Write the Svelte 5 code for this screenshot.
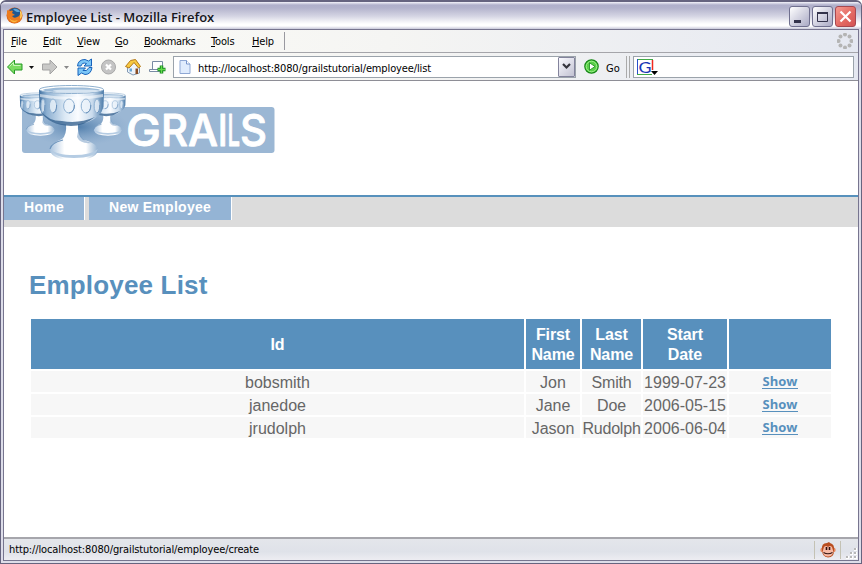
<script>
  const menus = [
    { label: 'File', w: 32 },
    { label: 'Edit', w: 34 },
    { label: 'View', w: 38 },
    { label: 'Go', w: 29 },
    { label: 'Bookmarks', w: 67 },
    { label: 'Tools', w: 41 },
    { label: 'Help', w: 32 }
  ];
  const employees = [
    { id: 'bobsmith', first: 'Jon', last: 'Smith', start: '1999-07-23' },
    { id: 'janedoe', first: 'Jane', last: 'Doe', start: '2006-05-15' },
    { id: 'jrudolph', first: 'Jason', last: 'Rudolph', start: '2006-06-04' }
  ];
  const dots = Array.from({ length: 8 }, (_, i) => ({
    x: 8 + 6.4 * Math.cos((i * Math.PI) / 4),
    y: 8 + 6.4 * Math.sin((i * Math.PI) / 4)
  }));
  const jewels = [
    { x: 24, rx: 2 },
    { x: 34, rx: 3.6 },
    { x: 50, rx: 5.4 },
    { x: 67, rx: 4.8 },
    { x: 78, rx: 2.8 }
  ];
  const wordmark = [
    { c: 'G', x: 126, w: 35 },
    { c: 'R', x: 161, w: 27 },
    { c: 'A', x: 188, w: 30 },
    { c: 'I', x: 218, w: 9.5 },
    { c: 'L', x: 227.5, w: 12.5 },
    { c: 'S', x: 240, w: 27 }
  ];
</script>

{#snippet cup()}
  <path d="M47 40 H59 Q58 53 64 57 Q79 60 79 68 Q76 77 55 77 Q34 77 31 68 Q31 60 43 56 Q48 52 47 40Z" fill="url(#metal)" />
  <path d="M32 66 Q35 75 55 75 Q76 75 79 66 Q72 72 55 72 Q37 72 32 66Z" fill="#b5cce3" />
  <path d="M60 43 Q60 53 65 57 L72 60 Q61 61 58 54Z" fill="#6f98c1" opacity=".5" />
  <path d="M31 66 Q32 60 44 57" fill="none" stroke="#6b93bc" stroke-width="1.2" />
  <path d="M20 7 L20.500 25 Q23 36 37 40 Q53 44 69 39 Q82 34 84.500 24 L85 7 Q52 13 20 7Z" fill="url(#bowl)" />
  <path d="M22 28 Q29 38 43 38 Q60 41 76 34 Q65 43 52 43 Q29 42 22 28Z" fill="#2b5a89" opacity=".75" />
  <path d="M21 11 Q52 17 84 11 L84 14 Q52 20 21 14Z" fill="#fff" opacity=".55" />
  <ellipse cx="52.500" cy="6.500" rx="32" ry="4" fill="#fff" stroke="#8fb0cf" stroke-width="1" />
  <ellipse cx="52.500" cy="7" rx="28.500" ry="2.600" fill="#9dbbd8" />
  <ellipse cx="57" cy="8" rx="23" ry="1.600" fill="#d6e4f1" />
  {#each jewels as j}
    <ellipse cx={j.x} cy="23" rx={j.rx} ry="7" fill="#edf4fb" fill-opacity=".75" stroke="#93b4d4" stroke-width="1" />
    <path d="M{j.x + j.rx} 22 Q{j.x + j.rx} 29 {j.x} 30" fill="none" stroke="#6a92bc" stroke-width="1" />
  {/each}
{/snippet}

<div class="window">
  <header class="titlebar">
    <svg class="fox" width="17" height="17" viewBox="0 0 17 17">
      <circle cx="8.5" cy="8.5" r="8" fill="#d8651c" />
      <circle cx="8.8" cy="7" r="6.2" fill="#20578f" />
      <path d="M7 2 Q12 1 14 5 L11 5 L9 4Z" fill="#5da6d8" />
      <path d="M1 3 Q2 4 4 4 Q6 3 7 4 L6 6 L9 8 L6 9 Q8 12 11 10 Q15 9 14 3 Q17 7 16 11 Q13 17 7 16 Q0 14 1 3Z" fill="#ec7b1d" />
      <path d="M3 11 Q6 15 12 13 Q9 17 5 14Z" fill="#f9b640" />
      <path d="M15 4 Q17 9 14 12 Q15 8 14 5Z" fill="#ffe271" />
    </svg>
    <span class="caption">Employee List - Mozilla Firefox</span>
    <div class="controls">
      <button class="ctl" aria-label="Minimize"><svg width="17" height="17"><path d="M3 13.500h7" stroke="#33334b" stroke-width="3" /></svg></button>
      <button class="ctl" aria-label="Maximize"><svg width="17" height="17"><path d="M3.500 4.500h10v9h-10z" fill="none" stroke="#33334b" /><path d="M3 5h11" stroke="#33334b" stroke-width="2" /></svg></button>
      <button class="ctl close" aria-label="Close"><svg width="17" height="17"><path d="M3.500 3.500l10 10M13.500 3.500l-10 10" stroke="#fff" stroke-width="2.200" /></svg></button>
    </div>
  </header>

  <div class="frame">
    <nav class="menubar">
      {#each menus as m}
        <span class="menu" class:tight={m.label === 'Bookmarks'} style="width:{m.w}px"><u>{m.label[0]}</u>{m.label.slice(1)}</span>
      {/each}
      <span class="menusep"></span>
      <svg class="throbber" width="16" height="16">
        {#each dots as d}<circle cx={d.x} cy={d.y} r="2" fill="#b4b4b4" />{/each}
      </svg>
    </nav>

    <div class="toolbar">
      <svg class="icons" width="164" height="20" viewBox="4 57 164 20">
        <path d="M7.500 67 L14.500 60 V64 H22 V70 H14.500 V74Z" fill="#7bdc60" stroke="#279b26" stroke-linejoin="round" />
        <path d="M9.500 66.500 L13.500 62.500 V65.500 H20.500" fill="none" stroke="#c9f6b9" />
        <path d="M29 66h5l-2.500 3z" fill="#111" />
        <path d="M57 67 L50 60 V64 H42.500 V70 H50 V74Z" fill="#c9c9c7" stroke="#a3a3a3" stroke-linejoin="round" />
        <path d="M64 66h5l-2.500 3z" fill="#888" />
        <path d="M77.500 66 Q78 59.500 85 59.500 L88.500 61 L91.500 59 V66 H84 L86.500 63.500 Q82 62 81 66Z" fill="#7cc6f6" stroke="#1763bc" />
        <path d="M92 67.500 Q91 74.500 85 74.500 L81.500 73 L78 75.500 V68 H85.500 L83 70.500 Q87 72 89 67.500Z" fill="#7cc6f6" stroke="#1763bc" />
        <circle cx="108.500" cy="67" r="7" fill="#c4c4c4" stroke="#a9a9a9" />
        <path d="M106 64.500l5 5M111 64.500l-5 5" stroke="#fff" stroke-width="2.200" />
        <path d="M127.500 66 L133 61 L139.500 67 V73 L133 75 L127.500 72Z" fill="#edf3fa" stroke="#8299b4" />
        <path d="M135.500 68.500h2.500v5.500h-2.500z" fill="#8a4c22" />
        <path d="M129.500 68.500h2.500v3h-2.500z" fill="#67a6d4" />
        <path d="M125.500 66.500 L130.500 60.500 L135.500 59.500 L140.500 66.500 L138.500 68 L134 62.500 L129 68Z" fill="#f8c940" stroke="#b4791a" stroke-linejoin="round" />
        <path d="M152.500 69V61.500h10V69M149.500 69.500h11v2h-11z" fill="#fff" stroke="#798ba4" />
        <path d="M161.500 65.500v8M157.500 69.500h8" stroke="#198d20" stroke-width="3.500" />
        <path d="M161.500 66v7M158 69.500h7" stroke="#65da4b" stroke-width="1.300" />
      </svg>
      <div class="address">
        <svg width="12" height="14"><path d="M1 .5h6.500l3.500 3.500v9.500h-10z" fill="#e0ecfd" stroke="#8fa8d4" /><path d="M7.500 .5v3.500h3.500" fill="#fff" stroke="#7795cc" /></svg>
        <span class="url">http://localhost:8080/grailstutorial/employee/list</span>
        <span class="drop"><svg width="9" height="7"><path d="M1 1l3.500 3.500L8 1" fill="none" stroke="#34343d" stroke-width="2.200" /></svg></span>
      </div>
      <svg class="gobtn" width="15" height="15"><circle cx="7.500" cy="7.500" r="6.700" fill="#5bd04a" stroke="#178818" stroke-width="1.200" /><circle cx="7.500" cy="7.500" r="5.300" fill="none" stroke="#9cf088" /><path d="M5.500 3.800l5.500 3.700-5.500 3.700z" fill="#fff" stroke="#178818" stroke-width=".8" /></svg>
      <span class="go">Go</span>
      <span class="grip"></span>
      <div class="search">
        <svg class="engine" width="22" height="18">
          <path d="M0 .5h16" stroke="#42a947" /><path d="M.5 0v16" stroke="#294fcb" /><path d="M15.500 1v10" stroke="#ef2921" stroke-width="1.500" /><path d="M0 15.500h15" stroke="#42a947" />
          <text x="1.500" y="13.500" textLength="13" lengthAdjust="spacingAndGlyphs" font-family="Lato, sans-serif" font-size="16" fill="#1737b5">G</text>
          <path d="M14 12h7l-3.500 4z" fill="#000" />
        </svg>
      </div>
    </div>

    <main class="page">
      <div class="brand">
        <svg width="262" height="84" viewBox="16 81 262 84">
          <defs>
            <linearGradient id="metal" x1="0" x2="1">
              <stop offset="0" stop-color="#a9c3de" /><stop offset=".3" stop-color="#fff" /><stop offset=".75" stop-color="#fff" /><stop offset="1" stop-color="#90b0d0" />
            </linearGradient>
            <linearGradient id="bowl" x1="0" x2="1">
              <stop offset="0" stop-color="#3f6f9f" /><stop offset=".12" stop-color="#8cafd1" /><stop offset=".4" stop-color="#dce9f5" /><stop offset=".6" stop-color="#fafcff" /><stop offset=".82" stop-color="#c9dbed" /><stop offset="1" stop-color="#4b7aa8" />
            </linearGradient>
            <radialGradient id="shade"><stop offset="0" stop-color="#3d6fa1" stop-opacity=".8" /><stop offset="1" stop-color="#7fa3c8" stop-opacity="0" /></radialGradient>
          </defs>
          <rect x="22" y="107" width="252.500" height="46" rx="3" fill="#9bb7d4" />
          <ellipse cx="78" cy="127" rx="52" ry="19" fill="url(#shade)" />
          <g transform="translate(8 91.500) scale(.59 .575)">{@render cup()}</g>
          <g transform="translate(75.500 91.500) scale(.59 .575)">{@render cup()}</g>
          <g transform="translate(19 83)">{@render cup()}</g>
          <text class="logo" y="146">{#each wordmark as l}<tspan x={l.x} textLength={l.w} lengthAdjust="spacingAndGlyphs">{l.c}</tspan>{/each}</text>
        </svg>
      </div>
      <div class="nav">
        <span class="tab home">Home</span>
        <span class="tab new">New Employee</span>
      </div>
      <div class="body">
        <h1>Employee List</h1>
        <table>
          <colgroup><col class="c1" /><col class="c2" /><col class="c3" /><col class="c4" /><col class="c5" /></colgroup>
          <thead><tr><th>Id</th><th>First<br />Name</th><th>Last<br />Name</th><th>Start<br />Date</th><th></th></tr></thead>
          <tbody>
            {#each employees as e}
              <tr><td>{e.id}</td><td>{e.first}</td><td class="last">{e.last}</td><td>{e.start}</td><td class="act"><span class="show">Show</span></td></tr>
            {/each}
          </tbody>
        </table>
      </div>
    </main>

    <footer class="status">
      <span class="msg">http://localhost:8080/grailstutorial/employee/create</span>
      <span class="cell">
        <svg width="16" height="16">
          <circle cx="2.500" cy="8" r="2.200" fill="#e58a60" /><circle cx="13.500" cy="8" r="2.200" fill="#e58a60" />
          <path d="M2 8Q1 1 7 1L9 0L10 1Q15 2 14 9Q14 15 8 15.500Q2 15 2 8Z" fill="#b94e20" />
          <path d="M4 5Q6 3 8 5Q10 3 12 5L13.500 10Q12 14.500 8 14.500Q4 14.500 2.500 10Z" fill="#f6b9a5" />
          <path d="M6.500 5v3M9.500 5v3" stroke="#32100c" stroke-width="1.600" /><path d="M3.500 10.500Q8 13 12.500 10.500" fill="none" stroke="#32100c" stroke-width="1.200" />
        </svg>
      </span>
      <svg class="size" width="13" height="13"><path d="M9 1h3v3h-3zM5 5h3v3h-3zM9 5h3v3h-3zM1 9h3v3h-3zM5 9h3v3h-3zM9 9h3v3h-3z" fill="#fff" /><path d="M9 1h2v2h-2zM5 5h2v2h-2zM9 5h2v2h-2zM1 9h2v2h-2zM5 9h2v2h-2zM9 9h2v2h-2z" fill="#b8b8b8" /></svg>
    </footer>
  </div>
</div>

<style>
  :global(body) { margin: 0; background: #fff; }
  .window { box-sizing: border-box; width: 862px; height: 564px; padding: 0 2px 2px; border: 1px solid #66647f; border-top-width: 2px; border-radius: 6px 6px 0 0; background: #dddde9; display: flex; flex-direction: column; font-family: "DejaVu Sans Condensed", "DejaVu Sans", sans-serif; font-stretch: condensed; font-size: 11px; color: #000; overflow: hidden; }
  .titlebar { height: 27px; margin: 0 -2px; flex: none; display: flex; align-items: center; padding: 0 5px 0 5px; background: linear-gradient(#f4f4fa 0, #b0b0cb 3px, #b3b3cc 6px, #d4d4e3 14px, #fff 22px, #fff 24px, #c8c8d9 27px); box-sizing: border-box; }
  .caption { font: 600 13px "Open Sans", sans-serif; color: #16161c; margin-left: 3px; letter-spacing: -.03px; white-space: nowrap; padding-top: 2px; }
  .controls { display: flex; gap: 2px; margin-left: auto; margin-top: 2px; }
  .ctl { box-sizing: border-box; width: 21px; height: 21px; padding: 1px; border: 1px solid #70708f; border-radius: 3px; background: linear-gradient(135deg, #fff, #d4d4e2 50%, #aaaac5); display: flex; }
  .close { border-color: #a64850; background: linear-gradient(135deg, #f59a91, #e46a63 55%, #d35353); }
  .frame { flex: 1; display: flex; flex-direction: column; border: 1px solid #77758f; min-height: 0; }
  .menubar { height: 22px; flex: none; display: flex; align-items: center; padding-left: 7px; background: linear-gradient(90deg, #fcfcf7, #f5f5f3 45%, #e5e8f1); border-bottom: 1px solid #a5a5aa; }
  .menu { flex: none; letter-spacing: -.15px; white-space: nowrap; }
  .tight { letter-spacing: -.45px; }
  .menusep { width: 1px; height: 18px; background: #9999a0; margin-left: 0; }
  .throbber { margin-left: auto; margin-right: 5px; }
  .toolbar { height: 27px; flex: none; display: flex; align-items: center; background: linear-gradient(90deg, #fcfcf7, #f5f5f3 45%, #e5e8f1); border-bottom: 1px solid #8e8e96; }
  .icons { flex: none; }
  .address { margin-left: 5px; box-sizing: border-box; width: 403px; height: 22px; border: 1px solid #9ba3ab; background: #fff; display: flex; align-items: center; padding-left: 5px; flex: none; }
  .url { margin-left: 7px; letter-spacing: -.13px; white-space: nowrap; padding-top: 3px; }
  .drop { margin-left: auto; box-sizing: border-box; width: 17px; height: 20px; border: 1px solid #83839c; border-radius: 1px; background: linear-gradient(135deg, #fafaff, #c2c2d2); display: flex; align-items: center; justify-content: center; }
  .gobtn { margin-left: 8px; flex: none; }
  .go { margin-left: 7px; width: 20px; padding-top: 3px; }
  .grip { box-sizing: border-box; width: 4px; height: 22px; border: solid #aaa; border-width: 0 1px; }
  .search { box-sizing: border-box; margin-left: 3px; width: 221px; height: 22px; border: 1px solid #9ba3ab; background: #fff; padding: 2px 0 0 3px; }
  .engine { display: block; overflow: visible; }
  .page { flex: 1; background: #fff; font-family: "Liberation Sans", Arial, sans-serif; display: flex; flex-direction: column; min-height: 0; }
  .brand { height: 114px; padding-left: 12px; flex: none; }
  .brand svg { display: block; overflow: visible; }
  .logo { font: 500 44px Inter, sans-serif; fill: #fff; stroke: #fff; stroke-width: .9px; stroke-linejoin: round; }
  .nav { height: 30px; flex: none; border-top: 2px solid #5791bc; background: #dcdcdc; display: flex; align-items: flex-start; }
  .tab { box-sizing: border-box; height: 23px; line-height: 21px; background: #94b4d5; color: #fff; font-weight: bold; font-size: 14px; letter-spacing: .27px; border-right: 1px solid #fff; padding-left: 20px; white-space: nowrap; }
  .home { width: 81px; margin-right: 4px; }
  .new { width: 143px; }
  .body { padding: 42px 25px 0; }
  h1 { margin: 0; font-size: 26px; line-height: 32px; letter-spacing: .17px; color: #5890bd; font-weight: bold; height: 48px; }
  table { table-layout: fixed; width: 804px; border-collapse: separate; border-spacing: 2px; font-size: 16px; text-align: center; }
  .c1 { width: 493px; } .c2 { width: 54px; } .c3 { width: 59px; } .c4 { width: 84px; } .c5 { width: 102px; }
  th { box-sizing: border-box; height: 50px; padding: 2px 0 0; background: #5890bd; color: #fff; line-height: 20px; letter-spacing: -.1px; }
  td { box-sizing: border-box; height: 21px; padding: 2px 0 0; background: #f7f7f7; color: #666; line-height: 19px; white-space: nowrap; }
  .last { letter-spacing: -.2px; }
  .act { padding: 0; }
  .show { display: block; margin: 3px auto 0; height: 14px; border-bottom: 1px solid #5890bd; color: #5890bd; font: bold 13px/15px "Open Sans", sans-serif; width: 36px; margin-bottom: 3px; }
  .status { height: 21px; flex: none; display: flex; align-items: center; border-top: 2px solid #a6a6ac; background: linear-gradient(#e4e6eb, #dfe2e9 60%, #ededf2); padding-left: 5px; }
  .msg { letter-spacing: -.12px; }
  .cell { margin-left: auto; box-sizing: border-box; width: 27px; height: 18px; border: solid #c4c2b4; border-width: 0 1px; display: flex; align-items: center; justify-content: center; }
  .size { margin-left: 4px; align-self: flex-end; }
</style>
